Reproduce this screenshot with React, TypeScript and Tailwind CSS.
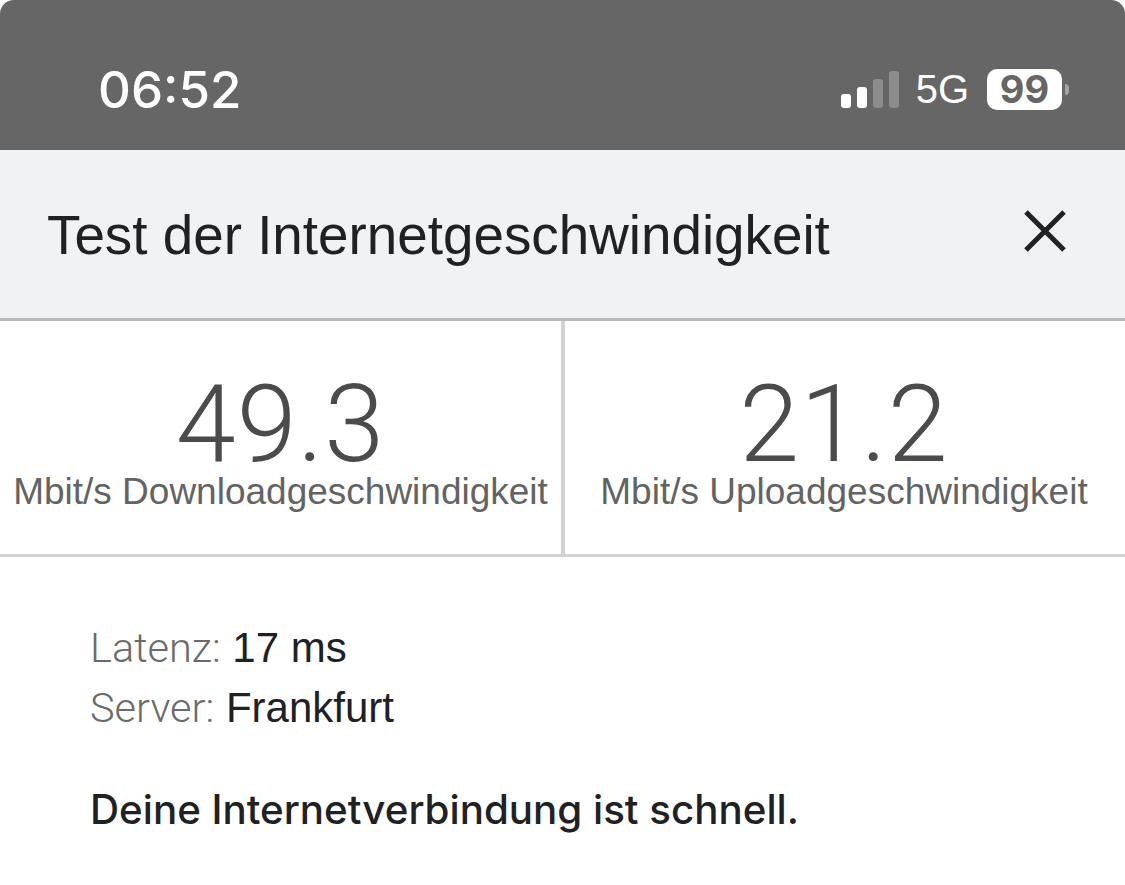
import React from "react";

const sans = "font-['Inter','Liberation_Sans',sans-serif]";
const helv = "font-['Liberation_Sans',Arial,sans-serif]";
const light = "font-['Roboto','Liberation_Sans',sans-serif] font-light";

const StatusBar = () => (
    <div className="h-[150px] bg-[#666666] rounded-t-[14px] flex items-center justify-between pl-[98px] pr-[56px] pt-[28px]">
        <span className={`${sans} text-[51px] leading-none font-medium text-white`}>06:52</span>
        <div className="flex items-center">
            <div className="flex items-end gap-[6px] h-[37px]">
                <div className="w-[10px] h-[14px] rounded-[3px] bg-white" />
                <div className="w-[10px] h-[21px] rounded-[3px] bg-white" />
                <div className="w-[10px] h-[29px] rounded-[3px] bg-[#8c8c8c]" />
                <div className="w-[10px] h-[37px] rounded-[3px] bg-[#8c8c8c]" />
            </div>
            <span className={`${helv} ml-[17px] text-[40px] leading-none text-white`}>5G</span>
            <div className="ml-[18px] w-[75px] h-[41px] rounded-[10px] bg-white flex items-center justify-center">
                <span className={`${sans} text-[38px] leading-none font-bold text-[#666666]`}>99</span>
            </div>
            <div className="ml-[3px] w-[4px] h-[11px] rounded-r-full bg-[#a3a3a3]" />
        </div>
    </div>
);

const Stat = ({ value, label, className }: { value: string; label: string; className?: string }) => (
    <div className={`flex flex-col items-center pt-[54px] ${className ?? ""}`}>
        <div className={`${light} text-[108px] leading-[98px] tracking-[1px] text-[#4b4b4b]`}>{value}</div>
        <div className={`${helv} text-[37px] leading-[38px] text-[#636363] whitespace-nowrap`}>{label}</div>
    </div>
);

export default function App() {
    return (
        <div className="w-[1125px] h-[885px] bg-white overflow-hidden">
            <StatusBar />

            <div className="h-[171px] bg-[#f1f2f4] border-b-[3px] border-[#b9b9b9] flex items-center justify-between pl-[47px] pr-[58px]">
                <h1 className={`${helv} text-[54.8px] leading-none font-normal text-[#202124] pt-[2px]`}>Test der Internetgeschwindigkeit</h1>
                <svg width="44" height="44" viewBox="0 0 44 44" className="mt-[-6px]">
                    <path d="M3 3 L41 41 M41 3 L3 41" stroke="#202124" strokeWidth="5" fill="none" />
                </svg>
            </div>

            <div className="h-[236px] flex border-b-[3px] border-[#d2d2d2]">
                <Stat value="49.3" label="Mbit/s Downloadgeschwindigkeit" className="w-[561px] shrink-0" />
                <div className="w-[4px] bg-[#d2d2d2] shrink-0" />
                <Stat value="21.2" label="Mbit/s Uploadgeschwindigkeit" className="flex-1 pr-[2px]" />
            </div>

            <div className={`${helv} pl-[90px] pt-[61px]`}>
                <div className="text-[42px] leading-[60px] text-[#202124]"><span className={`${light} text-[41.5px] text-[#6b6b6b]`}>Latenz:</span> 17 ms</div>
                <div className="text-[42px] leading-[60px] text-[#202124]"><span className={`${light} text-[41.5px] text-[#6b6b6b]`}>Server:</span> Frankfurt</div>
                <p className={`${sans} mt-[42px] text-[40.3px] leading-[60px] font-medium text-[#202124]`}>Deine Internetverbindung ist schnell.</p>
            </div>
        </div>
    );
}
